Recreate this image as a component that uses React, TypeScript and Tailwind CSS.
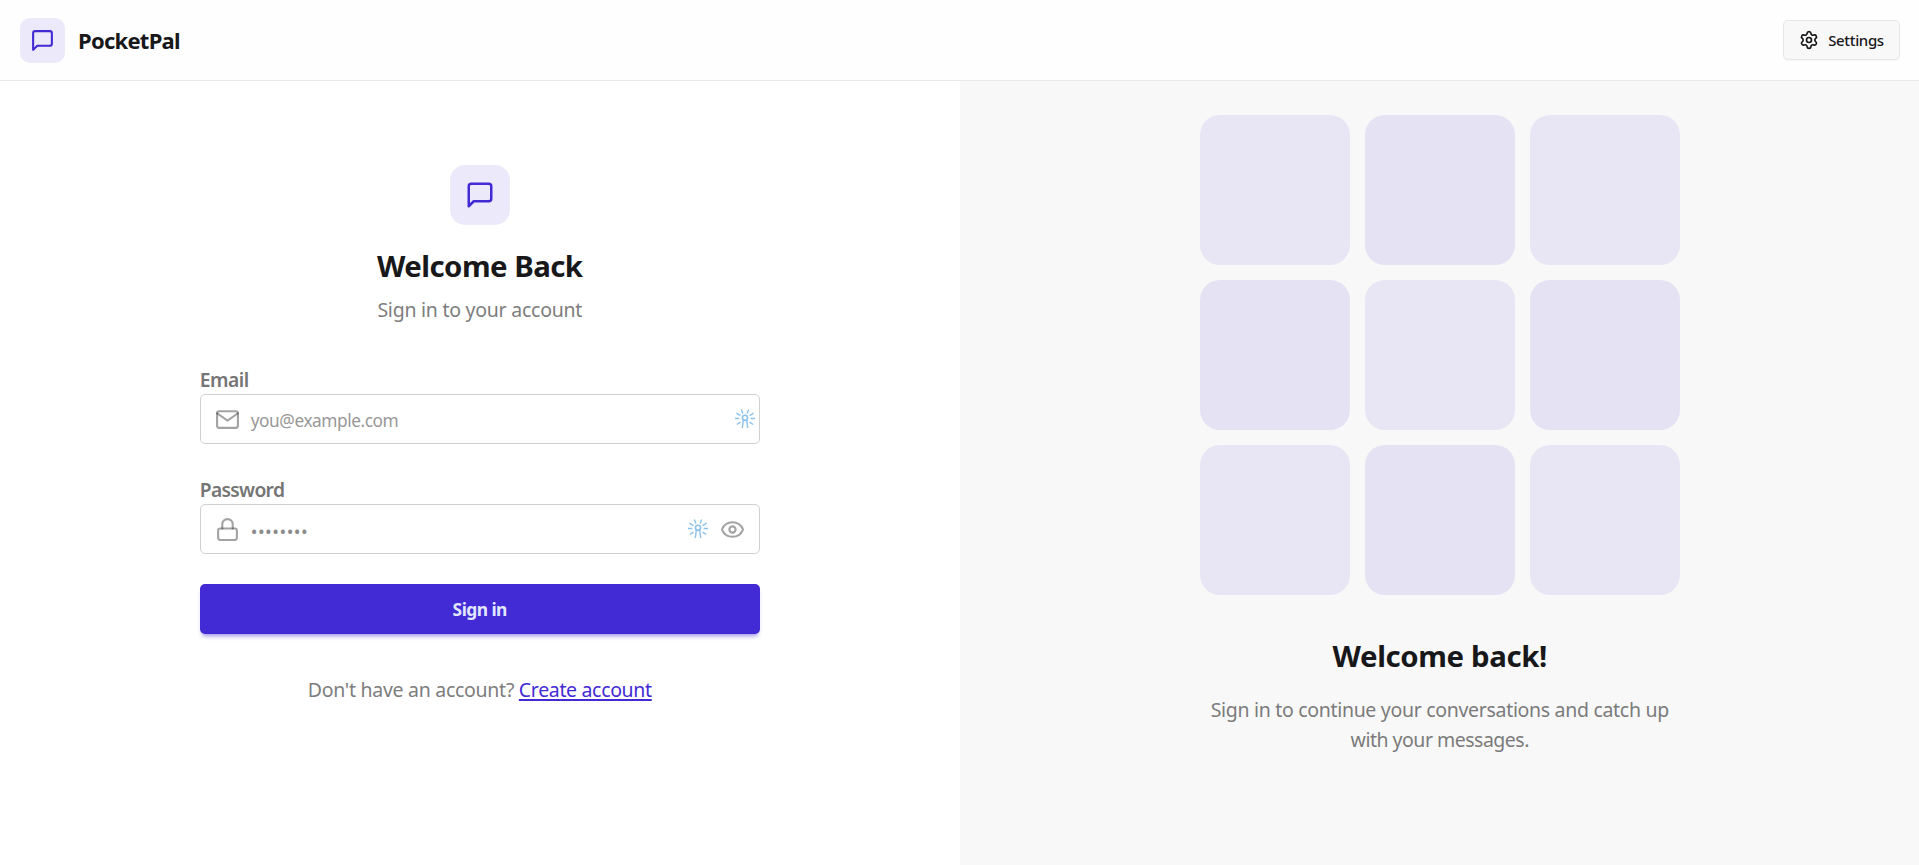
import type { ReactNode } from "react";
import { Eye, Settings } from "lucide-react";

const tiles = [
  "bg-[#e8e6f5]",
  "bg-[#e5e2f3]",
  "bg-[#e8e6f5]",
  "bg-[#e5e2f3]",
  "bg-[#e8e6f5]",
  "bg-[#e5e2f3]",
  "bg-[#e8e6f5]",
  "bg-[#e5e2f3]",
  "bg-[#e8e6f5]",
];

function MessageIcon({ className }: { className: string }) {
  return (
    <svg
      viewBox="0 0 24 24"
      fill="none"
      stroke="currentColor"
      strokeWidth="2"
      strokeLinecap="round"
      strokeLinejoin="round"
      className={className}
    >
      <path d="M21 15a2 2 0 0 1-2 2H7l-4 4V5a2 2 0 0 1 2-2h14a2 2 0 0 1 2 2z" />
    </svg>
  );
}

function FieldIcon({ children }: { children: ReactNode }) {
  return (
    <svg
      viewBox="0 0 24 24"
      fill="none"
      stroke="#18181b"
      strokeOpacity="0.4"
      strokeWidth="2"
      strokeLinecap="round"
      strokeLinejoin="round"
      className="size-[25px] shrink-0"
    >
      {children}
    </svg>
  );
}

function PasswordManagerIcon() {
  return (
    <svg
      viewBox="0 0 20 20"
      fill="none"
      stroke="#8cc2ea"
      strokeWidth="1.6"
      className="h-5 w-5 shrink-0"
    >
      <circle cx="10" cy="8.8" r="2.6" />
      <path
        strokeWidth="1.4"
        d="M8.3 11.2 7.3 19M11.7 11.2 12.7 19M0 9.5h4.3M15.7 9.5H20M1.4 4.2l4 2.4M18.6 4.2l-4 2.4M1.8 15.5l3.7-2.4M18.2 15.5l-3.7-2.4M6.3.6 7.9 4.4M13.7.6 12.1 4.4"
      />
    </svg>
  );
}

function Header() {
  return (
    <header className="flex h-[81px] shrink-0 items-center justify-between border-b border-[#ebebeb] bg-[#fefefe] pr-[19px] pl-5">
      <div className="flex items-center gap-[13px]">
        <div className="flex size-[45px] items-center justify-center rounded-[10px] bg-[#ece9fa] text-[#422ad5]">
          <MessageIcon className="size-[25px]" />
        </div>
        <h1 className="text-[22px] leading-[30px] font-bold tracking-[-0.74px]">PocketPal</h1>
      </div>
      <button className="flex h-10 w-[117px] items-center justify-center gap-[9px] rounded-[5px] border border-[#e6e6e6] bg-[#f8f8f8] text-[15px] font-medium tracking-[-0.35px] shadow-[0_2px_2px_-1px_#0000000a]">
        <Settings className="size-5" strokeWidth={2} />
        Settings
      </button>
    </header>
  );
}

export default function App() {
  return (
    <div className="flex h-[865px] w-full flex-col overflow-hidden bg-white font-['Noto_Sans',sans-serif] text-[#18181b]">
      <Header />
      <main className="grid min-h-0 flex-1 grid-cols-2">
        <section className="flex flex-col items-center pt-[84px]">
          <div className="flex size-[60px] items-center justify-center rounded-[15px] bg-[#ece9fa] text-[#422ad5]">
            <MessageIcon className="size-[30px]" />
          </div>
          <h2 className="mt-[21px] text-[29.4px] leading-[40px] font-bold tracking-[-0.55px]">
            Welcome Back
          </h2>
          <p className="mt-[9px] text-[19.5px] leading-[30px] tracking-[-0.25px] text-[#7d7d7d]">
            Sign in to your account
          </p>
          <form className="mt-10 flex w-[560px] flex-col text-[#757575]">
            <label className="text-[19.3px] leading-[30px] font-semibold tracking-[-0.5px]">
              Email
            </label>
            <div className="-mt-px flex h-[50px] items-center rounded-[5px] border border-[#d0d0d0] pr-1 pl-[14px]">
              <FieldIcon>
                <path d="M4 4h16a2 2 0 0 1 2 2v12a2 2 0 0 1-2 2H4a2 2 0 0 1-2-2V6a2 2 0 0 1 2-2z" />
                <path d="M22 6 12 13 2 6" />
              </FieldIcon>
              <span className="ml-[11px] flex-1 pt-1 text-[17.3px] tracking-[-0.45px] text-[#989898]">
                you@example.com
              </span>
              <PasswordManagerIcon />
            </div>
            <label className="mt-[31px] text-[19.3px] leading-[30px] font-semibold tracking-[-0.7px]">
              Password
            </label>
            <div className="-mt-px flex h-[50px] items-center rounded-[5px] border border-[#d0d0d0] pr-[14px] pl-[14px]">
              <FieldIcon>
                <rect x="3" y="11" width="18" height="11" rx="2" />
                <path d="M7 11V7a5 5 0 0 1 10 0v4" />
              </FieldIcon>
              <span className="ml-[11px] flex-1 pt-1 text-[17.8px] tracking-[0.5px] text-[#8b8b8b]">
                ••••••••
              </span>
              <PasswordManagerIcon />
              <Eye className="ml-3 size-[25px] text-[#a3a3a3]" strokeWidth={2} />
            </div>
            <button className="mt-[30px] h-[50px] rounded-[5px] bg-[#422ad5] pt-px text-[17.4px] font-bold tracking-[-0.55px] text-[#e0e7ff] shadow-[0_4px_4px_-2px_#422ad580]">
              Sign in
            </button>
          </form>
          <p className="mt-10 text-[19.5px] leading-[32px] tracking-[-0.28px] text-[#7d7d7d]">
            Don't have an account?{" "}
            <a className="tracking-[-0.34px] text-[#422ad5] underline decoration-[1.5px] underline-offset-[2px]">
              Create account
            </a>
          </p>
        </section>
        <section className="flex flex-col items-center bg-[#f8f8f8] pt-[34px] pl-px text-center">
          <div className="grid grid-cols-3 gap-[15px]">
            {tiles.map((tone, i) => (
              <div key={i} className={`size-[150px] rounded-[20px] ${tone}`} />
            ))}
          </div>
          <h2 className="mt-[41px] text-[29.4px] leading-[40px] font-bold tracking-[-0.38px]">
            Welcome back!
          </h2>
          <p className="mt-[19px] w-[480px] text-[19.5px] leading-[30px] tracking-[-0.31px] text-[#7b7b7b]">
            Sign in to continue your conversations and catch up{" "}
            <span className="tracking-[-0.5px]">with your messages.</span>
          </p>
        </section>
      </main>
    </div>
  );
}
